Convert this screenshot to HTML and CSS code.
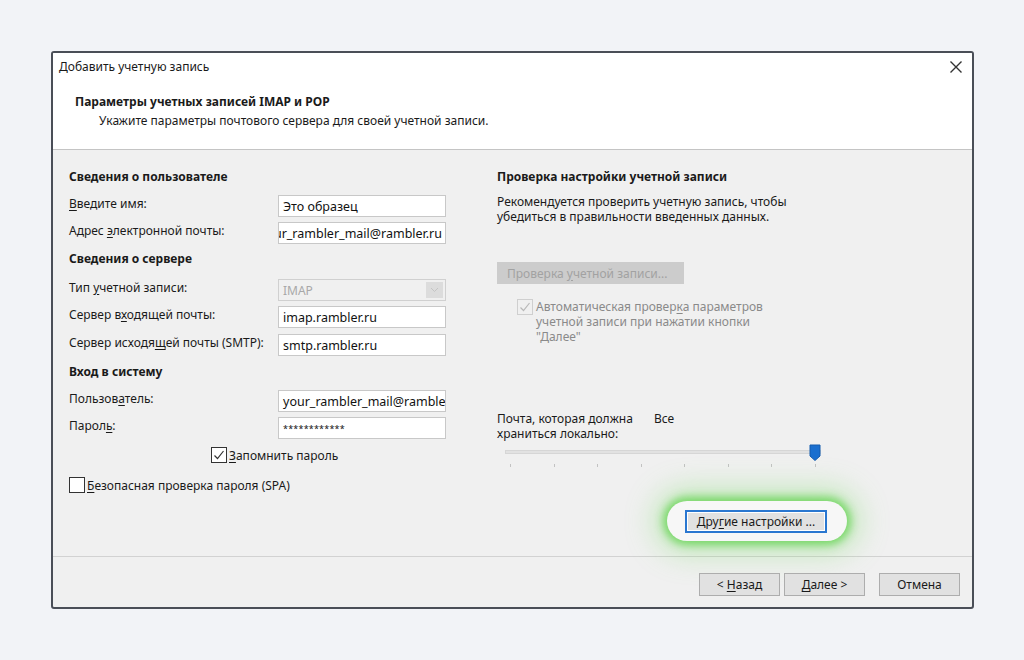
FILE: index.html
```html
<!DOCTYPE html>
<html lang="ru">
<head>
<meta charset="utf-8">
<title>Добавить учетную запись</title>
<link rel="stylesheet" href="styles.css">
</head>
<body>
<div class="page">
  <div class="dialog">
    <div class="header">
      <div class="title-row">
        <span class="title">Добавить учетную запись</span>
        <svg class="close" width="14" height="14" viewBox="0 0 14 14"><path d="M1.5 1.5 L12.5 12.5 M12.5 1.5 L1.5 12.5" stroke="#333" stroke-width="1.4" fill="none"/></svg>
      </div>
      <div class="h1">Параметры учетных записей IMAP и POP</div>
      <div class="sub">Укажите параметры почтового сервера для своей учетной записи.</div>
    </div>
    <div class="body">
      <div class="left">
        <div class="sec">Сведения о пользователе</div>
        <div class="row r-first"><span class="lbl"><u>В</u>ведите имя:</span><span class="field">Это образец</span></div>
        <div class="row"><span class="lbl">Адрес <u>э</u>лектронной почты:</span><span class="field end"><span>your_rambler_mail@rambler.ru</span></span></div>
        <div class="sec s2">Сведения о сервере</div>
        <div class="row r-first r-sel"><span class="lbl">Тип <u>у</u>четной записи:</span><span class="field disabled">IMAP<span class="arrow"><svg width="9" height="6" viewBox="0 0 9 6"><path d="M1 1 L4.5 4.5 L8 1" stroke="#c4c4c4" stroke-width="1" fill="none"/></svg></span></span></div>
        <div class="row"><span class="lbl">Сервер в<u>х</u>одящей почты:</span><span class="field">imap.rambler.ru</span></div>
        <div class="row r-smtp"><span class="lbl">Сервер исходя<u>щ</u>ей почты (SMTP):</span><span class="field">smtp.rambler.ru</span></div>
        <div class="sec s3">Вход в систему</div>
        <div class="row r-first"><span class="lbl">Пользов<u>а</u>тель:</span><span class="field">your_rambler_mail@rambler.ru</span></div>
        <div class="row"><span class="lbl">Парол<u>ь</u>:</span><span class="field pwd">************</span></div>
        <div class="check remember"><span class="box"><svg width="14" height="14" viewBox="0 0 14 14"><path d="M2.5 7.5 L5.5 10.5 L11.5 3" stroke="#333" stroke-width="1.2" fill="none"/></svg></span><span><u>З</u>апомнить пароль</span></div>
        <div class="check spa"><span class="box"></span><span><u>Б</u>езопасная проверка пароля (SPA)</span></div>
      </div>
      <div class="right">
        <div class="sec">Проверка настройки учетной записи</div>
        <div class="para">Рекомендуется проверить учетную запись, чтобы<br>убедиться в правильности введенных данных.</div>
        <div class="btn-disabled"><span>Проверка <u>у</u>четной записи...</span></div>
        <div class="auto"><span class="box dis"><svg width="14" height="14" viewBox="0 0 14 14"><path d="M2.5 7.5 L5.5 10.5 L11.5 3" stroke="#b8b8b8" stroke-width="1.2" fill="none"/></svg></span><span class="auto-text">Автоматическая провер<u>к</u>а параметров<br>учетной записи при нажатии кнопки<br>"Далее"</span></div>
        <div class="keep"><span class="keep-lbl">Почта, которая должна<br>храниться локально:</span><span>Все</span></div>
        <div class="slider">
          <div class="track"></div>
          <div class="thumb"><svg width="12" height="17" viewBox="0 0 12 17"><path d="M1 1 H11 V12 L6 16.5 L1 12 Z" fill="#1a6fcf" stroke="#155cae" stroke-width="1"/></svg></div>
        </div>
        <div class="ticks"><i></i><i></i><i></i><i></i><i></i><i></i><i></i><i></i></div>
        <div class="pill"><span class="btn focus"><span>Дру<u>г</u>ие настройки ...</span></span></div>
      </div>
    </div>
    <div class="footer">
      <span class="btn"><span>&lt; <u>Н</u>азад</span></span>
      <span class="btn"><span><u>Д</u>алее &gt;</span></span>
      <span class="btn cancel"><span>Отмена</span></span>
    </div>
  </div>
</div>
</body>
</html>
```
FILE: styles.css
```css
* { box-sizing: border-box; }
html, body { margin: 0; padding: 0; }
body {
  background: #f2f3f7;
  font-family: "Noto Sans", "Open Sans", sans-serif;
  font-size: 12px;
  color: #1a1a1a;
  width: 1024px;
  height: 660px;
  overflow: hidden;
}
u { text-decoration: underline; text-underline-offset: 2px; }
.page { padding: 51px 0 0 51px; }
.dialog {
  width: 923px;
  height: 558px;
  border: 2px solid #4a4e57;
  border-radius: 3px;
  display: flex;
  flex-direction: column;
  background: #f0f0f0;
  overflow: hidden;
}
.header {
  background: #fff;
  height: 97px;
  border-bottom: 1px solid #c4c4c4;
  flex: none;
}
.title-row {
  display: flex;
  justify-content: space-between;
  align-items: center;
  padding: 6px 9px 0 6px;
  height: 22px;
}
.title { line-height: 16px; }
.h1 {
  font-weight: bold;
  padding-left: 22px;
  margin-top: 19px;
  line-height: 16px;
}
.sub {
  padding-left: 46px;
  margin-top: 3px;
  line-height: 16px;
}
.body {
  flex: 1;
  display: flex;
  padding: 19px 0 0 16px;
  border-bottom: 1px solid #d2d2d2;
}
.left { width: 377px; display: flex; flex-direction: column; }
.right { margin-left: 51px; width: 360px; display: flex; flex-direction: column; }
.sec { font-weight: bold; line-height: 16px; }
.s2 { margin-top: 7px; }
.s3 { margin-top: 8px; }
.row {
  display: flex;
  align-items: center;
  height: 22px;
  margin-top: 5px;
}
.r-first { margin-top: 10px; }
.r-sel { margin-top: 12px; }
.r-smtp { margin-top: 6px; }
.lbl { width: 209px; flex: none; align-self: flex-start; line-height: 16px; margin-top: 1px; }
.field {
  width: 168px;
  height: 22px;
  border: 1px solid #c8c8c8;
  background: #fff;
  padding: 0 4px;
  display: flex;
  align-items: center;
  white-space: nowrap;
  overflow: hidden;
  color: #111;
  font-size: 12.5px;
}
.field.end { justify-content: flex-end; padding: 0 3px 0 0; }
.field.end span { flex: none; }
.field.pwd { font-size: 9px; letter-spacing: 0.2px; }
.field.disabled {
  background: #f0f0f0;
  color: #a8a8a8;
  border-color: #d0d0d0;
  position: relative;
  font-size: 12px;
}
.arrow {
  position: absolute;
  right: 2px;
  top: 2px;
  width: 17px;
  height: 16px;
  background: #dcdcdc;
  display: flex;
  align-items: center;
  justify-content: center;
}
.check { display: flex; align-items: center; height: 16px; }
.box {
  width: 16px;
  height: 16px;
  border: 1px solid #333;
  background: #fff;
  display: flex;
  align-items: center;
  justify-content: center;
  flex: none;
  margin-right: 2px;
}
.remember { margin-top: 8px; margin-left: 142px; }
.spa { margin-top: 14px; }
.para { margin-top: 9px; line-height: 15px; }
.btn-disabled {
  margin-top: 38px;
  width: 187px;
  height: 22px;
  background: #cccccc;
  color: #a2a2a2;
  display: flex;
  align-items: center;
  padding-left: 10px;
}
.auto { display: flex; margin-top: 15px; margin-left: 20px; color: #8a8a8a; }
.box.dis { border-color: #cfcfcf; background: #f0f0f0; }
.auto-text { line-height: 15px; margin-left: 1px; }
.keep { display: flex; margin-top: 67px; line-height: 15px; }
.keep-lbl { width: 157px; }
.slider { position: relative; height: 18px; margin-top: 3px; width: 324px; }
.track {
  position: absolute;
  left: 8px;
  right: 0;
  top: 6px;
  height: 4px;
  background: #e2e2e2;
  border: 1px solid #d6d6d6;
}
.thumb { position: absolute; left: 312px; top: 0; }
.ticks {
  display: flex;
  justify-content: space-between;
  width: 306px;
  margin-left: 13px;
  margin-top: 2px;
  height: 3px;
}
.ticks i { display: block; width: 1px; height: 3px; background: #c2c2c2; }
.pill {
  margin-top: 34px;
  margin-left: 170px;
  width: 180px;
  height: 40px;
  border-radius: 20px;
  background: #f7f7f7;
  box-shadow: 0 0 8px 4px rgba(90, 210, 70, 0.75), 0 0 28px 14px rgba(120, 220, 100, 0.35);
  display: flex;
  align-items: center;
  padding-left: 18px;
}
.btn {
  height: 23px;
  width: 81px;
  border: 1px solid #adadad;
  background: #e1e1e1;
  display: inline-flex;
  align-items: center;
  justify-content: center;
  color: #1a1a1a;
}
.btn.focus {
  width: 142px;
  border: 2px solid #2a77d0;
  box-shadow: inset 0 0 0 1px #fff;
}
.footer {
  flex: none;
  height: 50px;
  display: flex;
  justify-content: flex-end;
  align-items: flex-start;
  padding: 16px 12px 0 0;
  gap: 4px;
}
.btn.cancel { margin-left: 10px; }
```
